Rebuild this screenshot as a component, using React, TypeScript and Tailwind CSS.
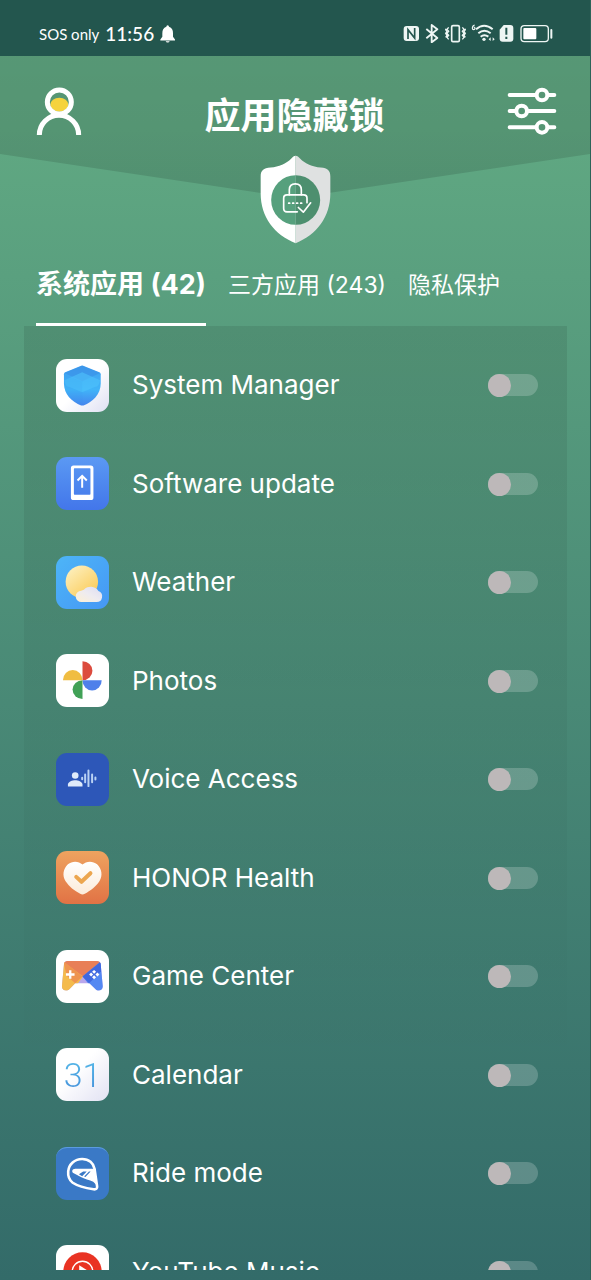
import { useState, type ReactNode } from "react";

function Tile({ className, children }: { className: string; children: ReactNode }) {
  return (
    <span className={`flex size-[53px] shrink-0 items-center justify-center overflow-hidden rounded-[11px] ${className}`}>
      {children}
    </span>
  );
}

function Glyph({ children }: { children: ReactNode }) {
  return (
    <svg viewBox="0 0 160 160" className="size-full" fill="none" aria-hidden="true">
      {children}
    </svg>
  );
}

function SystemManagerIcon() {
  return (
    <Tile className="bg-linear-to-br from-white from-50% to-[#dfe0f3]">
      <Glyph>
        <defs>
          <linearGradient id="smBody" x1="0" y1="0" x2="0" y2="1">
            <stop offset="0" stopColor="#3f9ff0" />
            <stop offset="0.6" stopColor="#41b4f8" />
            <stop offset="1" stopColor="#4585ee" />
          </linearGradient>
        </defs>
        <path d="M76 20q3-1 6 0l49 20q4 2 4 6v28c0 32-24 56-52 66q-3 1-7 0C48 130 24 106 24 74V46q0-4 4-6z" fill="url(#smBody)" />
        <path d="M79 20l54 22-54 25-54-25z" fill="#3a90e6" opacity=".6" />
        <path d="M79 40l54 24q-3 20-14 20L79 100 39 84Q28 84 25 64z" fill="#4fc3fb" opacity=".6" />
        <path d="M25 46l54 23v71C48 130 24 106 24 74z" fill="#2f8ff0" opacity=".1" />
      </Glyph>
    </Tile>
  );
}

function SoftwareUpdateIcon() {
  return (
    <Tile className="bg-linear-to-b from-[#5b99f3] to-[#4376ea]">
      <Glyph>
        <path fillRule="evenodd" d="M53 26h52q8 0 8 8v88q0 8-8 8H53q-8 0-8-8V34q0-8 8-8zm3 8q-2 0-2 2v76q0 2 2 2h46q2 0 2-2V36q0-2-2-2z" fill="#fff" />
        <path d="M79 93V58M65 71l14-14 14 14" stroke="#fff" strokeWidth="6" />
      </Glyph>
    </Tile>
  );
}

function WeatherIcon() {
  return (
    <Tile className="bg-linear-to-br from-[#4db5f7] to-[#4697f5]">
      <Glyph>
        <defs>
          <linearGradient id="wSun" x1="0" y1="0" x2="0.8" y2="1">
            <stop offset="0" stopColor="#fdf3c8" />
            <stop offset="1" stopColor="#fbca55" />
          </linearGradient>
          <linearGradient id="wCloud" x1="0" y1="1" x2="1" y2="0">
            <stop offset="0" stopColor="#fdf0d4" />
            <stop offset="0.5" stopColor="#eeebf0" />
            <stop offset="1" stopColor="#dcdcf3" />
          </linearGradient>
        </defs>
        <circle cx="78" cy="78" r="49" fill="url(#wSun)" />
        <path d="M77 139a17 17 0 0 1-1-34q4-1 8-3a27 27 0 0 1 44 4 17 17 0 0 1-6 33z" fill="url(#wCloud)" />
      </Glyph>
    </Tile>
  );
}

function PhotosIcon() {
  return (
    <Tile className="bg-white">
      <Glyph>
        <path d="M80 79V22a30 28.500 0 0 1 0 57z" fill="#dc4b3e" />
        <path d="M80 79h58a29 31 0 0 1-58 0z" fill="#4f80ea" />
        <path d="M80 79v57a30 28.500 0 0 1 0-57z" fill="#41a156" />
        <path d="M80 79H21a29.500 31 0 0 1 59 0z" fill="#f0bd42" />
      </Glyph>
    </Tile>
  );
}

function VoiceAccessIcon() {
  return (
    <Tile className="bg-[#2d57b8]">
      <Glyph>
        <g fill="#dfebfb">
          <circle cx="58" cy="68" r="10" />
          <path d="M36 101V95c0-9 14-13 22-13s22 4 22 13v6z" />
        </g>
        <path d="M79 75v4M88 65v23M98 53v47M109 65v23M119 74v6" stroke="#b9d2f4" strokeWidth="6" strokeLinecap="round" />
      </Glyph>
    </Tile>
  );
}

function HealthIcon() {
  return (
    <Tile className="bg-linear-to-b from-[#eea35f] to-[#e17245]">
      <Glyph>
        <defs>
          <linearGradient id="hHeart" x1="0" y1="0" x2="0" y2="1">
            <stop offset="0" stopColor="#fff" />
            <stop offset="1" stopColor="#fcebd9" />
          </linearGradient>
        </defs>
        <path d="M80 41C91 30 111 29 124 40c14 13 18 35 7 51-10 16-28 29-44 38q-7 4-14 0C56 120 39 107 29 91 18 75 22 53 36 40c13-11 33-10 44 1z" fill="url(#hHeart)" />
        <path d="M61 78l16 15 27-26" stroke="#eca64f" strokeWidth="12" strokeLinecap="round" strokeLinejoin="round" />
      </Glyph>
    </Tile>
  );
}

function GameCenterIcon() {
  return (
    <Tile className="bg-white">
      <Glyph>
        <defs>
          <clipPath id="gPad">
            <path d="M36 33h86q12 0 13 11l6 65c1 13-14 18-22 9L101 100H58L41 118c-9 9-24 4-23-9l6-65q1-11 12-11z" />
          </clipPath>
        </defs>
        <g clipPath="url(#gPad)">
          <rect width="160" height="160" fill="#b9a7ec" />
          <path d="M10 30h140L80 82z" fill="#e87f57" />
          <path d="M14 30l68 50-40 52-34-10z" fill="#f4bb4c" />
          <path d="M22 33l58 47-22 20-26-22z" fill="#ee9450" />
          <path d="M140 30L80 80l46 56 30-10z" fill="#5388f2" />
          <path d="M138 33L80 80l20 20 36-36z" fill="#3f68df" />
        </g>
        <path d="M43 61v26M30 74h26" stroke="#fff" strokeWidth="7" />
        <path d="M115 60l6 6-6 6-6-6zM115 76l6 6-6 6-6-6zM106 68l6 6-6 6-6-6zM125 68l6 6-6 6-6-6z" fill="#fff" />
      </Glyph>
    </Tile>
  );
}

function CalendarIcon() {
  return (
    <Tile className="bg-linear-to-br from-white from-40% to-[#e2e2f3]">
      <span className="bg-linear-to-b from-[#55b9e8] to-[#4590da] bg-clip-text font-[Roboto] text-[34px] leading-none font-light text-transparent">31</span>
    </Tile>
  );
}

function RideModeIcon() {
  return (
    <Tile className="border-t border-[#5b9be0] bg-[#3a79c6]">
      <Glyph>
        <path d="M50 107C38 98 35 84 36 72c2-22 20-38 43-38 21 0 35 13 38 30l8 54q1 11-11 9c-22-3-46-8-64-20z" stroke="#fff" strokeWidth="8" strokeLinejoin="round" />
        <path d="M118 64H58c-10 0-13 9-5 14l22 11c10 6 27 9 38 15l10 10z" fill="#fff" />
        <path d="M82 72h11L79 87l-10-6zM100 72h5L89 89l-4-1z" fill="#3a79c6" />
      </Glyph>
    </Tile>
  );
}

function YouTubeMusicIcon() {
  return (
    <Tile className="bg-white">
      <Glyph>
        <circle cx="80" cy="80" r="58" fill="#e93323" />
        <circle cx="80" cy="80" r="31" stroke="#fff" strokeWidth="4" />
        <path d="M70 61l30 19-30 19z" fill="#fff" />
      </Glyph>
    </Tile>
  );
}

const apps: { name: string; icon: ReactNode }[] = [
  { name: "System Manager", icon: <SystemManagerIcon /> },
  { name: "Software update", icon: <SoftwareUpdateIcon /> },
  { name: "Weather", icon: <WeatherIcon /> },
  { name: "Photos", icon: <PhotosIcon /> },
  { name: "Voice Access", icon: <VoiceAccessIcon /> },
  { name: "HONOR Health", icon: <HealthIcon /> },
  { name: "Game Center", icon: <GameCenterIcon /> },
  { name: "Calendar", icon: <CalendarIcon /> },
  { name: "Ride mode", icon: <RideModeIcon /> },
  { name: "YouTube Music", icon: <YouTubeMusicIcon /> },
];

function StatusBar() {
  return (
    <div className="flex h-14 shrink-0 items-center justify-between bg-[#23564e] pt-[11px] pr-[36px] pl-[39px] font-[Lato,sans-serif] text-white">
      <div className="flex items-center gap-1.5">
        <span className="text-[15px] leading-5">SOS only</span>
        <span className="text-[19px] leading-5 font-medium">11:56</span>
        <svg viewBox="482 72 48 56" className="h-[19px] w-4" aria-hidden="true">
          <path d="M505 75q4 0 4 5c9 3 12 10 12 19v11l6 8v3h-44v-3l6-8V99c0-9 3-16 12-19q0-5 4-5zM499 123h12q-1 4-6 4t-6-4z" fill="#fff" />
        </svg>
      </div>
      <svg viewBox="68 72 453 57" className="h-[19px] w-[151px]" fill="none" stroke="#eef6f4" aria-hidden="true">
        <rect x="70" y="78" width="46" height="45" rx="9" fill="#eef6f4" stroke="none" />
        <path d="M83 117V89l20 25V84" stroke="#23564e" strokeWidth="5" />
        <path d="M138 87l33 27-17 13V75l17 13-33 27" strokeWidth="5.500" strokeLinejoin="round" />
        <rect x="214" y="77" width="23" height="48" rx="4" strokeWidth="5" />
        <path d="M205 82l-5 6 5 6-5 6 5 6-5 6 5 6M197 86l-1 3 4 6-4 5 4 6-4 6M246 82l5 6-5 6 5 6-5 6 5 6-5 6M254 86l1 3-4 6 4 5-4 6 4 6" strokeWidth="4" />
        <path d="M283 75c-5 1-7 5-7 10a4 4 0 1 0 4-4" strokeWidth="3.500" />
        <path d="M287 88q24-21 50 0M294 100q18-15 37 0M301 110q11-9 23 0" strokeWidth="6" />
        <circle cx="311" cy="118" r="5" fill="#eef6f4" stroke="none" />
        <path d="M331 112v11l-6-5zM337 112v11l6-5z" fill="#eef6f4" stroke="none" />
        <path d="M370 75h20q9 0 9 9v32q0 9-9 9h-23q-9 0-9-9V89z" fill="#eef6f4" stroke="none" />
        <path d="M378 83v21M378 110v7" stroke="#23564e" strokeWidth="6" />
        <rect x="422" y="77" width="82" height="48" rx="10" strokeWidth="4" />
        <rect x="429" y="84" width="39" height="34" rx="3" fill="#fff" stroke="none" />
        <path d="M513 90v23" strokeWidth="6" strokeLinecap="round" />
      </svg>
    </div>
  );
}

function ShieldLogo() {
  return (
    <svg viewBox="181 225 213 266" className="h-[89px] w-[71px]" fill="none" aria-hidden="true">
      <path d="M288 227c-5 0-9 4-13 8-16 16-37 25-62 27-22 1-30 10-30 26v52c0 70 41 124 105 149z" fill="#fff" />
      <path d="M288 227c5 0 9 4 13 8 16 16 37 25 62 27 21 1 29 10 29 26v52c0 70-41 124-104 149z" fill="#dfe1e1" />
      <path d="M288 285a73 74 0 0 0 0 149z" fill="#56a07d" />
      <path d="M288 285a73 74 0 0 1 0 149z" fill="#4d8f6f" />
      <g stroke="#fff" strokeWidth="5" strokeLinecap="round" strokeLinejoin="round">
        <path d="M269 344v-15q0-18 18-18t18 18v15" />
        <path d="M293 395h-31q-10 0-10-10v-31q0-10 10-10h50q10 0 10 10v14" />
        <path d="M296 382l15 14 22-28" />
        <path d="M267 369h3M279 369h3M291 369h3M303 369h3" />
      </g>
    </svg>
  );
}

const tabs = ["系统应用 (42)", "三方应用 (243)", "隐私保护"];

export default function App() {
  const [tab, setTab] = useState(0);
  return (
    <div className="flex h-screen flex-col border-r border-[#2c6359] bg-linear-to-b from-[#60a882] from-10% to-[#336b69] font-[Inter,'Noto_Sans_CJK_SC',sans-serif] text-white">
      <StatusBar />
      <header className="relative shrink-0">
        <div className="absolute inset-x-0 top-0 h-[142px] bg-linear-to-b from-black/10 to-black/13 [clip-path:polygon(0_0,100%_0,100%_69%,50%_100%,0_69%)]" />
        <div className="relative flex items-start justify-between pt-[31px] pr-[33px] pl-9">
          <button aria-label="Account">
            <svg viewBox="108 261 138 147" className="h-[49px] w-[46px]" fill="none" stroke="#fff" strokeWidth="15" aria-hidden="true">
              <ellipse cx="178" cy="314" rx="27" ry="21" fill="#f5d33d" stroke="none" />
              <circle cx="178" cy="306" r="36" />
              <path d="M118 405a59 59 0 0 1 118 0" />
            </svg>
          </button>
          <h1 className="pt-1 text-4xl leading-[50px] font-bold">应用隐藏锁</h1>
          <button aria-label="Settings">
            <svg viewBox="381 261 150 147" className="h-[49px] w-[50px]" fill="none" stroke="#fff" strokeWidth="12" strokeLinecap="round" aria-hidden="true">
              <path d="M389 285h78M505 285h18M389 333h17M444 333h79M389 382h78M505 382h18" />
              <circle cx="486" cy="285" r="16" />
              <circle cx="425" cy="333" r="16" />
              <circle cx="486" cy="382" r="16" />
            </svg>
          </button>
        </div>
        <div className="relative mt-[14px] flex justify-center">
          <ShieldLogo />
        </div>
      </header>
      <nav role="tablist" className="flex h-[82px] shrink-0 gap-[22px] px-9">
        {tabs.map((label, i) => (
          <button
            key={label}
            role="tab"
            aria-selected={tab === i}
            onClick={() => setTab(i)}
            className={`border-b-3 pt-1 whitespace-nowrap ${tab === i ? "border-white text-[27px] font-bold" : "border-transparent text-[23px]"}`}
          >
            {label}
          </button>
        ))}
      </nav>
      <main className="mr-[23px] mb-[10px] ml-6 min-h-0 flex-1 overflow-y-auto bg-linear-to-b from-black/9 to-transparent to-80% pt-[10px] [scrollbar-width:none]">
        <ul>
          {apps.map((app) => (
            <li key={app.name} className="h-[98px] even:h-[99px]">
              <label className="flex h-full items-center pr-[29px] pl-8">
                {app.icon}
                <span className="ml-[23px] flex-1 text-[26px] leading-8">{app.name}</span>
                <input
                  type="checkbox"
                  role="switch"
                  className="h-[22px] w-[50px] appearance-none rounded-full bg-white/20 before:block before:size-[23px] before:rounded-full before:bg-[#bdb8b9] checked:before:ml-auto checked:before:bg-white"
                />
              </label>
            </li>
          ))}
        </ul>
      </main>
    </div>
  );
}
